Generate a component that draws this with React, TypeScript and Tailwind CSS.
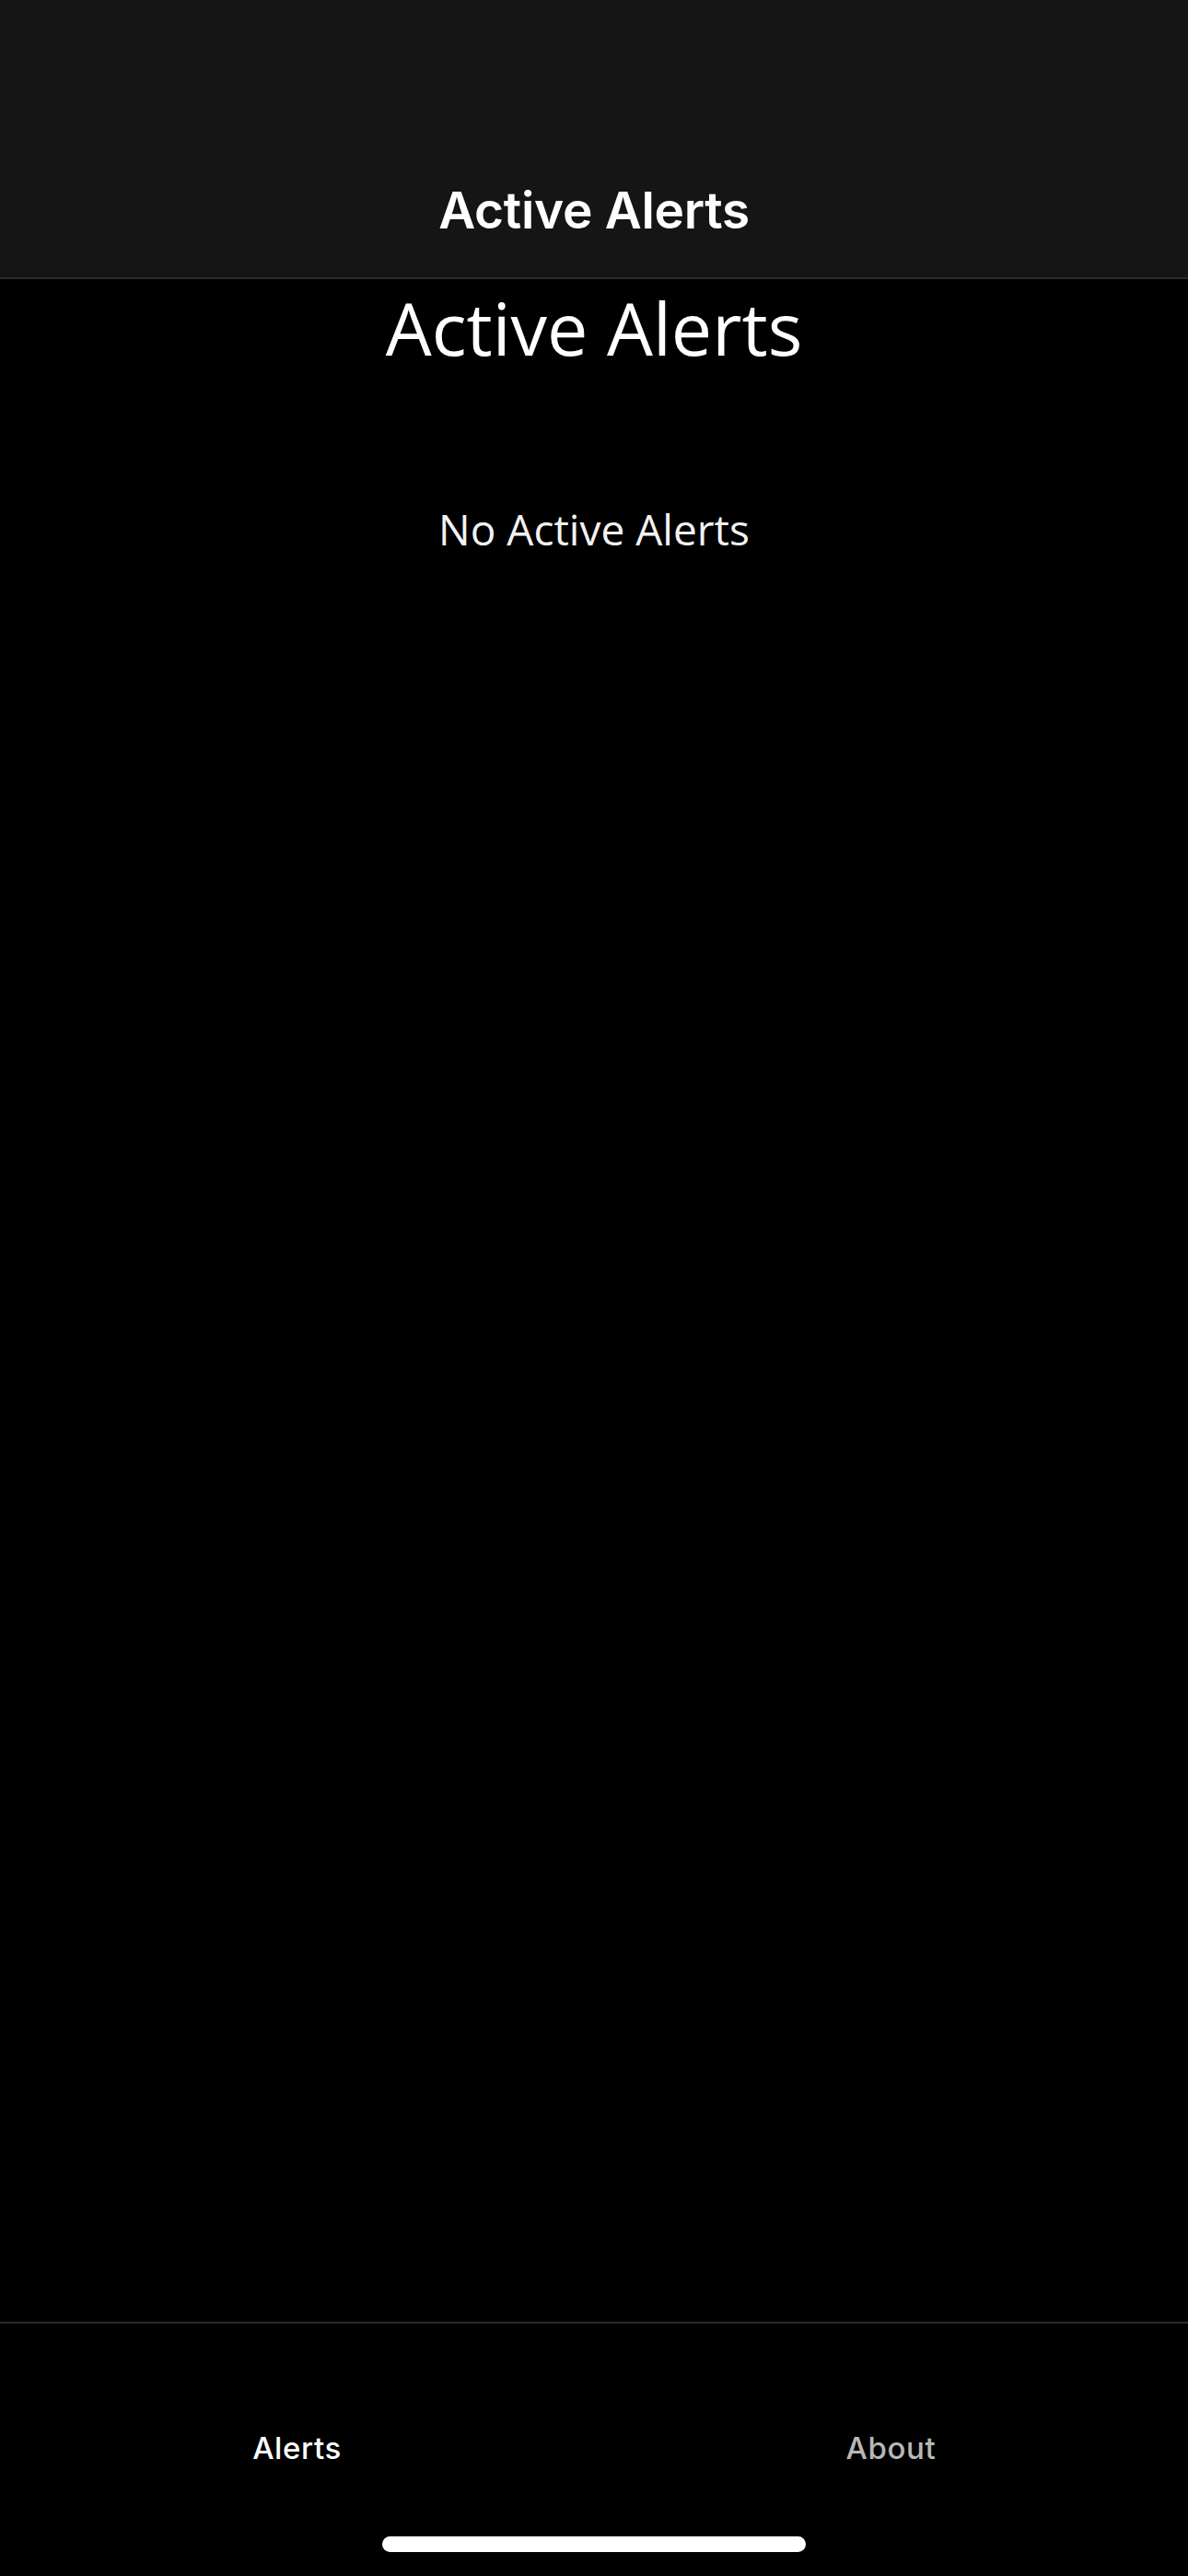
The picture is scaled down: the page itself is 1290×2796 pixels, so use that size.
export default function App() {
  return (
    <div className="flex h-[2796px] w-[1290px] flex-col bg-black text-white" style={{ fontFamily: '"Open Sans", sans-serif' }}>
      <header className="flex h-[303px] shrink-0 items-end justify-center border-b-2 border-[#2a2a2a] bg-[#151515] pb-[45px]">
        <h1 className="font-['Inter',sans-serif] text-[55px] leading-none font-semibold tracking-[-0.3px]">Active Alerts</h1>
      </header>

      <main className="flex flex-1 flex-col items-center">
        <h2 className="mt-[3px] text-[79px] leading-[100px] font-normal">Active Alerts</h2>
        <p className="mt-[138px] text-[46px] leading-[60px] text-[#f2f2f2]">No Active Alerts</p>
      </main>

      <nav className="relative flex h-[276px] shrink-0 flex-col border-t-2 border-[#2a2a2a] bg-black">
        <div className="grid grid-cols-2 pt-[119px] font-['Inter',sans-serif] text-[33px] leading-none font-medium tracking-[0.6px]">
          <span className="text-center text-white">Alerts</span>
          <span className="text-center text-[#b8b8b8]">About</span>
        </div>
        <div className="mt-auto mb-[26px] flex justify-center">
          <div className="h-[17px] w-[460px] rounded-full bg-white" />
        </div>
      </nav>
    </div>
  )
}
